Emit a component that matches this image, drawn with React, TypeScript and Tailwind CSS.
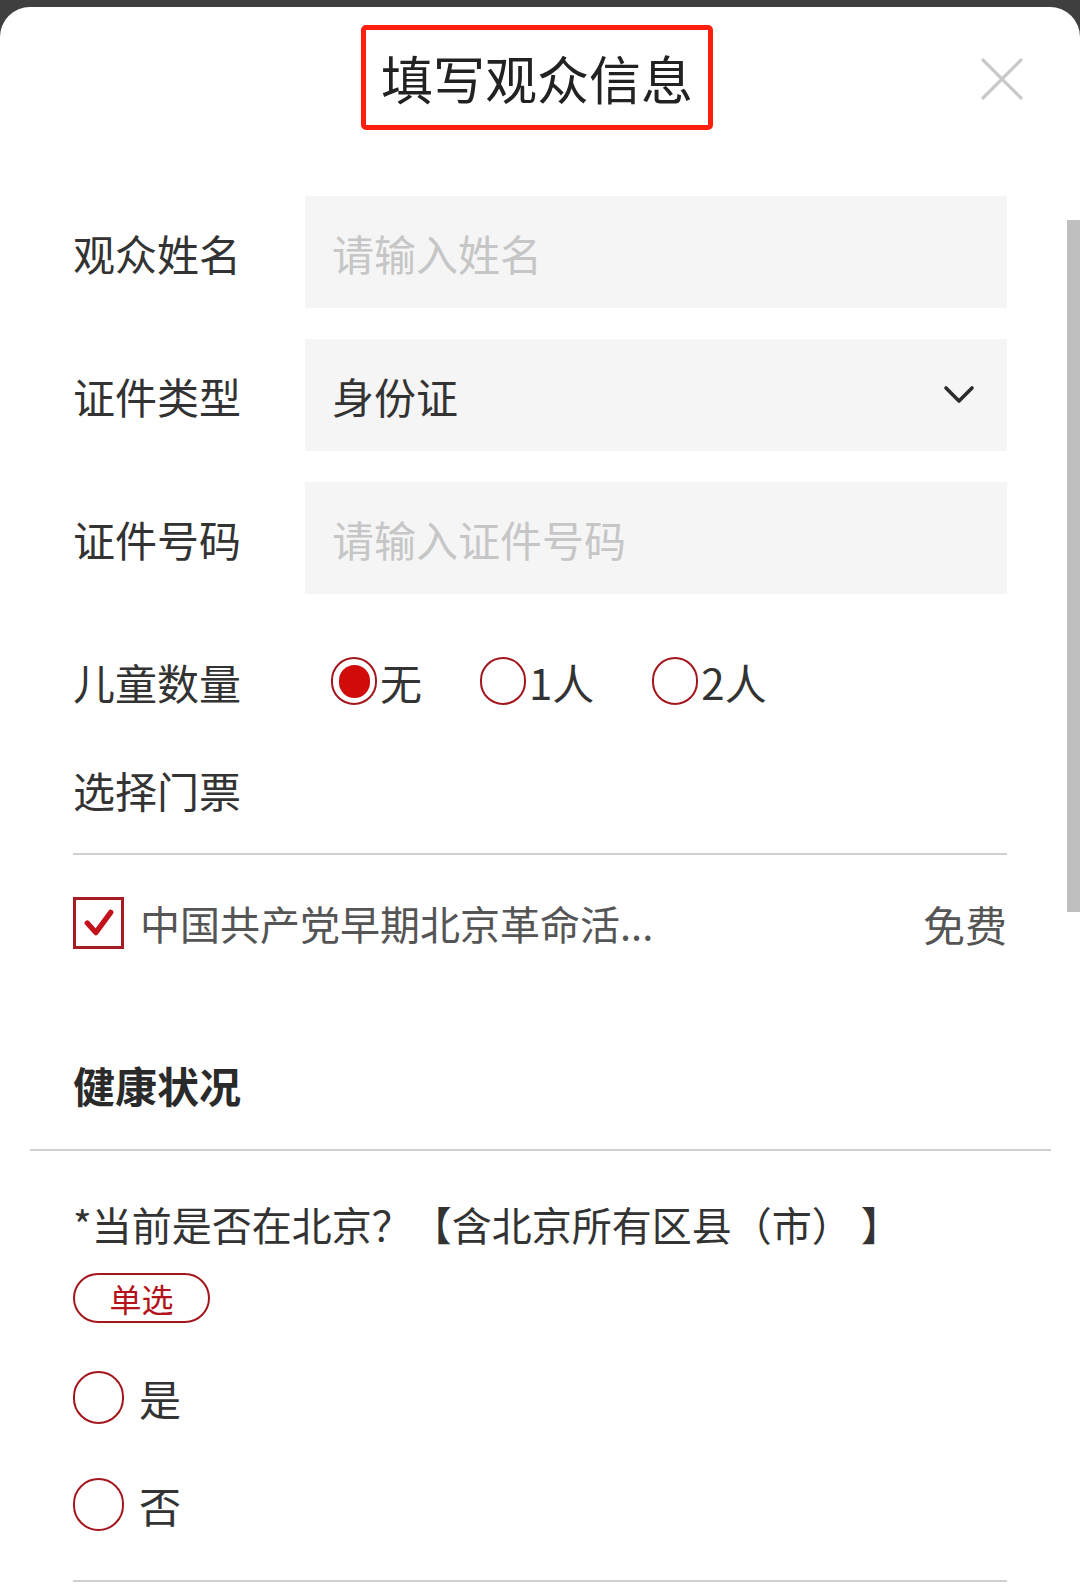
import React, { useState } from 'react';

const FONT = { fontFamily: '"Noto Sans CJK SC", "Noto Sans", sans-serif' };

const CHILD_OPTIONS = ['无', '1人', '2人'];

function Radio({ checked, size }: { checked?: boolean; size: 'sm' | 'lg' }) {
  const dims = size === 'sm' ? 'w-[46px] h-[48px]' : 'w-[51px] h-[53px]';
  return (
    <span
      className={`${dims} shrink-0 rounded-full border-[2.5px] border-[#a3161d] flex items-center justify-center bg-white`}
    >
      {checked && <span className="w-[31px] h-[33px] rounded-full bg-[#d10a0a]" />}
    </span>
  );
}

function Field({ label, children }: { label: string; children: React.ReactNode }) {
  return (
    <div className="flex items-center h-[112px]">
      <div className="w-[232px] shrink-0 text-[42px] text-[#333]">{label}</div>
      {children}
    </div>
  );
}

export default function App() {
  const [kids, setKids] = useState('无');
  const [ticket, setTicket] = useState(true);
  const [inBeijing, setInBeijing] = useState<string | null>(null);

  return (
    <div className="w-[1080px] h-[1594px] bg-[#3f3f3f] pt-[7px] overflow-hidden" style={FONT}>
      <div className="relative h-full bg-white rounded-t-[30px]">
        {/* ── Header ── */}
        <div className="h-[189px] flex justify-center pt-[18px] pr-[6px]">
          <div className="w-[352px] h-[105px] border-[5px] border-[#ff1d0e] rounded-[5px] flex items-center justify-center">
            <span className="text-[52px] leading-none text-[#222]">填写观众信息</span>
          </div>
        </div>
        <button className="absolute left-[980px] top-[50px] w-[44px] h-[44px]" aria-label="关闭">
          <svg viewBox="0 0 44 44" className="w-full h-full" fill="none" stroke="#c9c9c9" strokeWidth={3.2} strokeLinecap="round">
            <path d="M3 3L41 41M41 3L3 41" />
          </svg>
        </button>

        {/* scrollbar */}
        <div className="absolute right-0 top-[213px] w-[13px] h-[692px] bg-[#bfbfbf]" />

        {/* ── Form ── */}
        <div className="px-[73px]">
          <div className="flex flex-col gap-[31px]">
            <Field label="观众姓名">
              <div className="flex-1 h-full bg-[#f5f5f5] flex items-center pl-[27px] text-[42px] text-[#c6c6c6]">
                请输入姓名
              </div>
            </Field>
            <Field label="证件类型">
              <div className="flex-1 h-full bg-[#f5f5f5] flex items-center justify-between pl-[27px] pr-[32px] text-[42px] text-[#333]">
                <span>身份证</span>
                <svg viewBox="0 0 32 22" className="w-[32px] h-[22px]" fill="none" stroke="#2b2b2b" strokeWidth={3.6} strokeLinecap="round" strokeLinejoin="round">
                  <path d="M3 4L16 17L29 4" />
                </svg>
              </div>
            </Field>
            <Field label="证件号码">
              <div className="flex-1 h-full bg-[#f5f5f5] flex items-center pl-[27px] text-[42px] text-[#c6c6c6]">
                请输入证件号码
              </div>
            </Field>
          </div>

          <div className="mt-[57px] h-[60px] flex items-center">
            <div className="w-[258px] shrink-0 text-[42px] text-[#333]">儿童数量</div>
            <div className="flex items-center gap-[58px]">
              {CHILD_OPTIONS.map(opt => (
                <label key={opt} className="flex items-center gap-[3px] cursor-pointer" onClick={() => setKids(opt)}>
                  <Radio size="sm" checked={kids === opt} />
                  <span className="text-[42px] text-[#333]">{opt}</span>
                </label>
              ))}
            </div>
          </div>

          <div className="mt-[48px] h-[60px] flex items-center text-[42px] text-[#333]">选择门票</div>

          <div className="mt-[34px] h-[2px] bg-[#cfcfcf]" />

          <div className="mt-[38px] h-[60px] flex items-center justify-between">
            <label className="flex items-center gap-[16px] cursor-pointer" onClick={() => setTicket(v => !v)}>
              <span className="w-[51px] h-[52px] border-[3px] border-[#a51d22] flex items-center justify-center">
                {ticket && (
                  <svg viewBox="0 0 30 30" className="w-[32px] h-[32px]" fill="none" stroke="#c3121b" strokeWidth={5} strokeLinecap="round" strokeLinejoin="round">
                    <path d="M4 15L12 24L26 5" />
                  </svg>
                )}
              </span>
              <span className="text-[40px] text-[#555]">中国共产党早期北京革命活...</span>
            </label>
            <span className="text-[42px] text-[#555]">免费</span>
          </div>

          <div className="mt-[101px] h-[60px] flex items-center text-[42px] font-bold text-[#2a2a2a]">健康状况</div>

          <div className="mt-[35px] -ml-[43px] -mr-[44px] h-[2px] bg-[#cfcfcf]" />

          <div className="mt-[43px] h-[60px] flex items-center text-[40px] text-[#333] whitespace-nowrap">
            *当前是否在北京？【含北京所有区县（市）&nbsp;】
          </div>

          <div className="mt-[19px] w-[137px] h-[50px] rounded-full border-[2.5px] border-[#a3161d] flex items-center justify-center text-[32px] leading-none text-[#b3131b]">
            单选
          </div>

          <div className="mt-[44px] flex flex-col gap-[47px]">
            {['是', '否'].map(opt => (
              <label key={opt} className="h-[60px] flex items-center gap-[15px] cursor-pointer" onClick={() => setInBeijing(opt)}>
                <Radio size="lg" checked={inBeijing === opt} />
                <span className="text-[42px] text-[#333]">{opt}</span>
              </label>
            ))}
          </div>

          <div className="mt-[46px] h-[2px] bg-[#cfcfcf]" />
        </div>
      </div>
    </div>
  );
}
